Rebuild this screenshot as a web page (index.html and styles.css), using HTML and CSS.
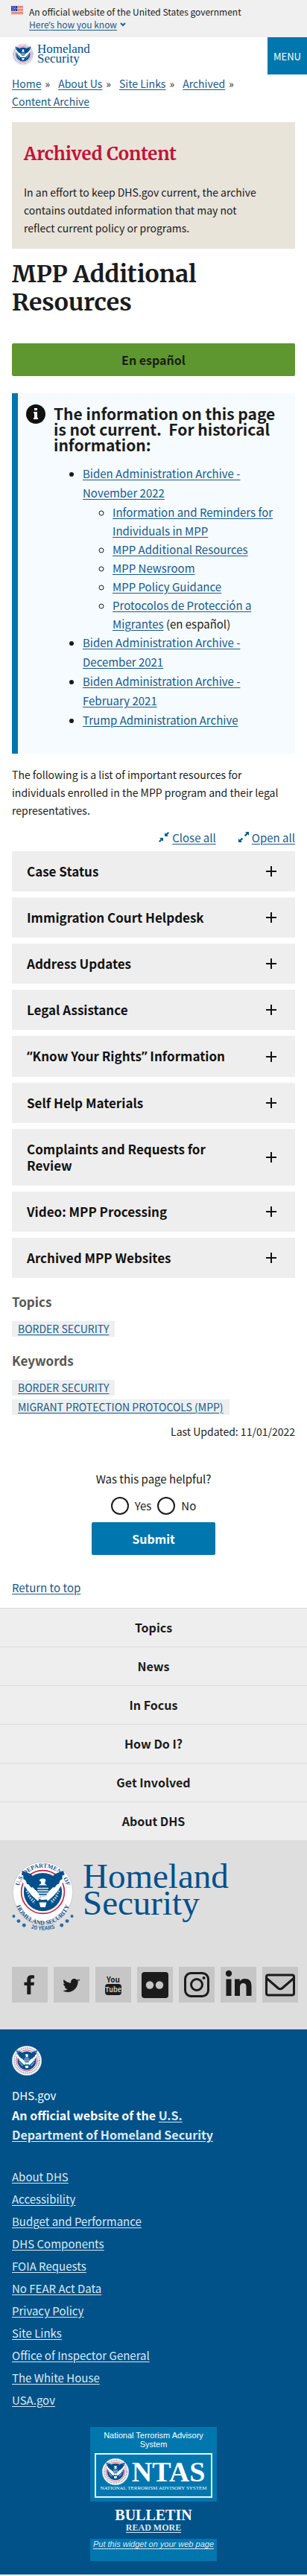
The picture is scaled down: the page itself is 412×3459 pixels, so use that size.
FILE: index.html
```html
<!DOCTYPE html>
<html lang="en">
<head>
<meta charset="utf-8">
<meta name="viewport" content="width=device-width, initial-scale=1">
<title>MPP Additional Resources | Homeland Security</title>
<link rel="stylesheet" href="styles.css">
</head>
<body>
<svg class="sprite" aria-hidden="true">
  <symbol id="emblem" viewBox="-50 -50 100 100">
    <circle r="49.5" fill="#fff" stroke="#c3c5cc"/>
    <circle r="35.5" fill="#fff" stroke="#c8203c" stroke-width="2"/>
    <circle r="31.5" fill="#00508c"/>
    <path fill="#fff" d="M-39-30C-30-24-22-16-16-8L-9 0-4 8-8 15-18 6C-26-2-33-14-39-30ZM39-30C30-24 22-16 16-8L9 0 4 8 8 15 18 6C26-2 33-14 39-30Z"/>
    <path fill="#00508c" d="M-34-35-20-30C-13-24-10-14-8-3L-12-3-17-8-19-7-24-13-26-13-29-20-32-21-32-27-35-28ZM34-35 20-30C13-24 10-14 8-3L12-3 17-8 19-7 24-13 26-13 29-20 32-21 32-27 35-28Z"/>
    <path fill="#fff" d="M-6-19C-4-23 3-23 5-20L4-17 3-14 7-11-7-11-3-14-3-17ZM-6 17H6L4 25H-4ZM-3 7 5 7 10 12-2 13-8 10Z"/>
    <path fill="none" stroke="#cfe0ee" stroke-width="2" d="M-9-6H9M-9-2H9M-8 2H8M-6 6H6"/>
    <path fill="none" stroke="#bcd3e6" stroke-width="3" stroke-dasharray="2 2" d="M-27-2-20 10-12 16M27-2 20 10 12 16M-24 6-14 19M24 6 14 19"/>
    <path fill="#e5d9a5" d="M-9 9-3 7-2 10-7 12Z"/>
  </symbol>
  <symbol id="ring" viewBox="-50 -50 100 100">
    <circle r="42" fill="none" stroke="#8c9bb8" stroke-width="6" stroke-dasharray="2 2"/>
  </symbol>
  <symbol id="plus" viewBox="0 0 14 14"><path d="M7 0v14M0 7h14" fill="none" stroke="#111" stroke-width="2"/></symbol>
</svg>

<div class="banner">
  <svg class="flag" viewBox="0 0 16 11" aria-hidden="true"><path fill="#fff" d="M0 0h16v11H0z"/><path stroke="#db3e1f" stroke-width="1" d="M0 .5h16M0 2.5h16M0 4.5h16M0 6.5h16M0 8.5h16M0 10.5h16"/><path fill="#1e33b1" d="M0 0h8v7H0z"/><path stroke="#fff" stroke-width="1" stroke-dasharray="1 1" d="M1 1.500h6M2 3.500h6M1 5.500h6"/></svg>
  <div>
    <p class="banner-text">An official website of the United States government</p>
    <button class="banner-button" type="button"><span>Here<span class="quote">’</span>s how you know</span><svg viewBox="0 0 8 6" aria-hidden="true"><path d="M1 1l3 3 3-3" fill="none" stroke="#1d6794" stroke-width="2"/></svg></button>
  </div>
</div>

<header class="header">
  <a class="logo" href="#"><svg class="logo-seal" aria-hidden="true"><use href="#emblem"/><use href="#ring"/></svg><span>Homeland<br>Security</span></a>
  <button class="menu" type="button">MENU</button>
</header>

<main class="main">
  <nav aria-label="Breadcrumb"><ol class="crumbs">
    <li><a href="#">Home</a></li>
    <li><a href="#">About Us</a></li>
    <li><a href="#">Site Links</a></li>
    <li><a href="#">Archived</a></li>
    <li><a href="#">Content Archive</a></li>
  </ol></nav>

  <section class="archived">
    <h2>Archived Content</h2>
    <p>In an effort to keep DHS.gov current, the archive contains outdated information that may not reflect current policy or programs.</p>
  </section>

  <h1>MPP Additional Resources</h1>
  <a class="translate" href="#">En español</a>

  <section class="alert">
    <svg class="info" viewBox="0 0 26 26" aria-hidden="true"><circle cx="13" cy="13" r="13" fill="#111"/><path fill="#fff" d="M11 5h4v3h-4zM10 10h5v8h1v2h-6v-2h1v-6h-1z"/></svg>
    <div class="alert-body">
      <h2>The information on this page is not current.&nbsp; For historical information:</h2>
      <ul>
        <li><a href="#">Biden Administration Archive - November 2022</a>
          <ul>
            <li><a href="#">Information and Reminders for Individuals in MPP</a></li>
            <li><a href="#">MPP Additional Resources</a></li>
            <li><a href="#">MPP Newsroom</a></li>
            <li><a href="#">MPP Policy Guidance</a></li>
            <li><a href="#">Protocolos de Protección a Migrantes</a> (en español)</li>
          </ul>
        </li>
        <li><a href="#">Biden Administration Archive - December 2021</a></li>
        <li><a href="#">Biden Administration Archive - February 2021</a></li>
        <li><a href="#">Trump Administration Archive</a></li>
      </ul>
    </div>
  </section>

  <p class="intro">The following is a list of important resources for individuals enrolled in the MPP program and their legal representatives.</p>

  <div class="toggles">
    <a href="#"><svg viewBox="0 0 14 14" aria-hidden="true"><path fill="#0b5c8f" d="M8 1v5h5l-1.700-1.700L14 1.500 12.500 0 9.700 2.700zM6 13V8H1l1.700 1.700L0 12.500 1.500 14l2.800-2.700z"/></svg><span>Close all</span></a>
    <a href="#"><svg viewBox="0 0 14 14" aria-hidden="true"><path fill="#0b5c8f" d="M14 0v5l-1.700-1.700L9.500 6.200 7.800 4.500l2.900-2.800L9 0zM0 14V9l1.700 1.700 2.800-2.900 1.700 1.700-2.900 2.800L5 14z"/></svg><span>Open all</span></a>
  </div>

  <div class="accordion">
    <button type="button"><span>Case Status</span><svg aria-hidden="true"><use href="#plus"/></svg></button>
    <button type="button"><span>Immigration Court Helpdesk</span><svg aria-hidden="true"><use href="#plus"/></svg></button>
    <button type="button"><span>Address Updates</span><svg aria-hidden="true"><use href="#plus"/></svg></button>
    <button type="button"><span>Legal Assistance</span><svg aria-hidden="true"><use href="#plus"/></svg></button>
    <button type="button"><span><span class="quote">“</span>Know Your Rights<span class="quote">”</span> Information</span><svg aria-hidden="true"><use href="#plus"/></svg></button>
    <button type="button"><span>Self Help Materials</span><svg aria-hidden="true"><use href="#plus"/></svg></button>
    <button type="button"><span>Complaints and Requests for Review</span><svg aria-hidden="true"><use href="#plus"/></svg></button>
    <button type="button"><span>Video: MPP Processing</span><svg aria-hidden="true"><use href="#plus"/></svg></button>
    <button type="button"><span>Archived MPP Websites</span><svg aria-hidden="true"><use href="#plus"/></svg></button>
  </div>

  <section class="tags">
    <h2>Topics</h2>
    <ul><li><a href="#">BORDER SECURITY</a></li></ul>
    <h2>Keywords</h2>
    <ul><li><a href="#">BORDER SECURITY</a></li><li><a href="#">MIGRANT PROTECTION PROTOCOLS (MPP)</a></li></ul>
  </section>
  <p class="updated">Last Updated: 11/01/2022</p>

  <form class="feedback">
    <p id="helpful">Was this page helpful?</p>
    <div class="choices" role="radiogroup" aria-labelledby="helpful">
      <label><input type="radio" name="helpful" value="yes">Yes</label>
      <label><input type="radio" name="helpful" value="no">No</label>
    </div>
    <button type="button">Submit</button>
  </form>
  <a class="top-link" href="#">Return to top</a>
</main>

<footer>
  <nav class="footer-nav" aria-label="Footer">
    <a href="#">Topics</a>
    <a href="#">News</a>
    <a href="#">In Focus</a>
    <a href="#">How Do I?</a>
    <a href="#">Get Involved</a>
    <a href="#">About DHS</a>
  </nav>

  <div class="brand">
    <a class="brand-logo" href="#">
      <svg class="brand-seal" viewBox="-51 -51 102 124" aria-label="U.S. Department of Homeland Security, 20 years">
        <defs><path id="arc-full" d="M-38 12A40 40 0 1 1 38 12"/><path id="arc-low" d="M-46 8A46 46 0 0 0 46 8"/><path id="arc-years" d="M-40 49A64 64 0 0 0 40 49"/></defs>
        <use href="#emblem" x="-50" y="-50" width="100" height="100"/>
        <g class="seal-text">
          <text><textPath href="#arc-full" startOffset="50%">U.S. DEPARTMENT OF</textPath></text>
          <text><textPath href="#arc-low" startOffset="50%">HOMELAND SECURITY</textPath></text>
          <text class="years"><textPath href="#arc-years" startOffset="50%">20 YEARS</textPath></text>
        </g>
        <g fill="#2a6ca3"><circle cx="-48" cy="40" r="2.500"/><circle cx="-40" cy="48" r="3"/><circle cx="-31" cy="55" r="3"/><circle cx="48" cy="40" r="2.500"/><circle cx="40" cy="48" r="3"/><circle cx="31" cy="55" r="3"/></g>
      </svg>
      <span>Homeland<br>Security</span>
    </a>
    <div class="social">
      <a href="#" aria-label="Facebook"><svg viewBox="0 0 48 48"><path fill="#1b1b1b" d="M30 11.500v4h-2.500c-1.800 0-2.200.9-2.200 2.200v3H30l-.6 4.300h-4.100V37h-5V25h-3.800v-4.300h3.800v-3.500c0-3.800 2.300-5.900 5.800-5.900 1.600 0 3.200.1 3.900.2z"/></svg></a>
      <a href="#" aria-label="Twitter"><svg viewBox="0 0 48 48"><path fill="#1b1b1b" d="M35 16.500a9 9 0 0 1-2.300 2.400c.2 9.500-7 15-13.700 15-2.500 0-4.800-.7-6.700-1.900 2.300.2 4.600-.4 6.500-1.900-2-.1-3.500-1.300-4.100-3 .7.100 1.300.1 2-.1-2.100-.5-3.600-2.300-3.600-4.500.6.300 1.300.5 2 .6-2-1.400-2.600-4-1.400-6.100 2.300 2.800 5.700 4.600 9.500 4.800-.7-3 1.500-5.700 4.500-5.700 1.300 0 2.500.6 3.300 1.500 1-.2 2-.6 2.900-1.100-.3 1-1 1.900-2 2.500 1-.1 2.200-.4 3.100-.5z"/></svg></a>
      <a href="#" aria-label="YouTube"><svg viewBox="0 0 48 48" class="youtube"><rect x="13" y="23" width="22" height="15" rx="4" fill="#1b1b1b"/><text x="24" y="21">You</text><text x="24" y="34" class="tube">Tube</text></svg></a>
      <a href="#" aria-label="Flickr"><svg viewBox="0 0 48 48"><rect x="6" y="7" width="36" height="35" rx="4" fill="#1b1b1b"/><circle cx="17" cy="24.500" r="5.200" fill="#c6c6c6"/><circle cx="30" cy="24.500" r="5.200" fill="#c6c6c6"/></svg></a>
      <a href="#" aria-label="Instagram"><svg viewBox="0 0 48 48"><rect x="8.500" y="8.500" width="31" height="31" rx="8" fill="none" stroke="#1b1b1b" stroke-width="3"/><circle cx="24" cy="24" r="7.500" fill="none" stroke="#1b1b1b" stroke-width="3"/><circle cx="33.500" cy="15" r="2" fill="#1b1b1b"/></svg></a>
      <a href="#" aria-label="LinkedIn"><svg viewBox="0 0 48 48"><circle cx="11" cy="9" r="4.200" fill="#1b1b1b"/><path fill="#1b1b1b" d="M7.500 16.500h7V39h-7zM19 16.500h6.700v3.100c1.300-2.200 3.700-3.700 7-3.700 7 0 8.800 4.400 8.800 10.600V39h-7V27.800c0-3-.3-5.900-4-5.900-3.600 0-4.500 2.500-4.500 5.800V39h-7z"/></svg></a>
      <a href="#" aria-label="Email"><svg viewBox="0 0 48 48"><rect x="5.500" y="11" width="37" height="27" rx="2.500" fill="none" stroke="#1b1b1b" stroke-width="3"/><path d="M6 15.500 21 28.500c2 1.700 4 1.700 6 0L42 15.500" fill="none" stroke="#1b1b1b" stroke-width="3"/></svg></a>
    </div>
  </div>

  <div class="identifier">
    <svg class="small-seal" aria-hidden="true"><use href="#emblem"/><use href="#ring"/></svg>
    <p>DHS.gov</p>
    <p class="official">An official website of the <a href="#">U.S. Department of Homeland Security</a></p>
    <ul class="links">
      <li><a href="#">About DHS</a></li>
      <li><a href="#">Accessibility</a></li>
      <li><a href="#">Budget and Performance</a></li>
      <li><a href="#">DHS Components</a></li>
      <li><a href="#">FOIA Requests</a></li>
      <li><a href="#">No FEAR Act Data</a></li>
      <li><a href="#">Privacy Policy</a></li>
      <li><a href="#">Site Links</a></li>
      <li><a href="#">Office of Inspector General</a></li>
      <li><a href="#">The White House</a></li>
      <li><a href="#">USA.gov</a></li>
    </ul>

    <div class="ntas">
      <div class="ntas-head">
        <p>National Terrorism Advisory System</p>
        <div class="ntas-box">
          <div class="ntas-row"><svg class="ntas-seal" aria-hidden="true"><use href="#emblem"/><use href="#ring"/></svg><strong>NTAS</strong></div>
          <span class="ntas-small">NATIONAL TERRORISM ADVISORY SYSTEM</span>
        </div>
      </div>
      <div class="ntas-body"><strong>BULLETIN</strong><a href="#">READ MORE</a></div>
      <div class="ntas-foot"><a href="#">Put this widget on your web page</a></div>
    </div>
  </div>
</footer>
</body>
</html>
```
FILE: styles.css
```css
* { box-sizing: border-box; }

body {
  margin: 0;
  background: #fff;
  color: #1b1b1b;
  font-family: "Source Sans Pro", "Noto Sans CJK SC", sans-serif;
  font-size: 15px;
  line-height: 25px;
}

h1, h2, p, ul, ol { margin: 0; padding: 0; }
a { color: #185a8c; text-underline-offset: 2px; }
button { font-family: inherit; border: 0; margin: 0; cursor: pointer; }
.sprite { display: block; width: 0; height: 0; }
.quote { font-family: "Open Sans", sans-serif; }

/* Government banner */
.banner {
  display: flex;
  gap: 8px;
  padding: 7px 15px 8px;
  background: #f0f0f0;
  font-size: 12px;
  line-height: 17px;
}
.flag { width: 16px; height: 11px; margin-top: 1px; }
.banner-button {
  display: flex;
  align-items: center;
  gap: 4px;
  padding: 0;
  background: none;
  color: #185a8c;
  font-size: 12px;
  line-height: 17px;
}
.banner-button > span { text-decoration: underline; text-underline-offset: 2px; }
.banner-button svg { width: 8px; height: 6px; }

/* Header */
.header {
  display: flex;
  justify-content: space-between;
  align-items: flex-start;
}
.logo {
  display: flex;
  gap: 4px;
  padding: 8px 0 0 16px;
  color: #00508c;
  font-family: "Liberation Serif", serif;
  font-size: 17px;
  line-height: 13px;
  text-decoration: none;
}
.logo span { padding-top: 1px; }
.logo-seal { width: 30px; height: 30px; }
.menu {
  width: 53px;
  height: 50px;
  padding: 0;
  background: #0076ae;
  color: #fff;
  font-size: 13px;
}

/* Main column */
.main { padding: 0 16px; }
.crumbs {
  display: flex;
  flex-wrap: wrap;
  column-gap: 11px;
  list-style: none;
  font-size: 14px;
  line-height: 24px;
}
.crumbs li:not(:last-child)::after { content: "»"; margin-left: 5px; }

.archived {
  margin-top: 16px;
  padding: 30px 36px 16px 16px;
  background: #e8e4da;
  font-size: 14px;
  line-height: 24px;
}
.archived h2 {
  margin-bottom: 26px;
  color: #c41237;
  font-family: Merriweather, "DejaVu Serif Condensed", "DejaVu Serif", serif;
  font-size: 24px;
  line-height: 26px;
}
h1 {
  margin-top: 15px;
  font-family: Merriweather, "DejaVu Serif Condensed", "DejaVu Serif", serif;
  font-size: 32px;
  line-height: 38px;
}
.translate {
  display: block;
  margin-top: 36px;
  padding: 9px;
  border-radius: 2px;
  background: #5e972f;
  color: #1b1b1b;
  font-size: 16px;
  font-weight: 700;
  line-height: 26px;
  text-align: center;
  text-decoration: none;
}

.alert {
  display: flex;
  gap: 11px;
  margin-top: 23px;
  padding: 15px 16px 32px 11px;
  border-left: 8px solid #0076ae;
  background: #f5fbfe;
}
.info { flex: none; width: 26px; height: 26px; }
.alert-body { padding-top: 2px; }
.alert h2 { margin-bottom: 15px; font-size: 21px; line-height: 21px; }
.alert ul { padding-left: 39px; line-height: 26px; }
.alert ul ul { padding-left: 40px; line-height: 25px; }

.intro { margin-top: 16px; font-size: 14px; line-height: 24px; }
.toggles {
  display: flex;
  justify-content: flex-end;
  gap: 30px;
  margin: 13px 0 6px;
  line-height: 24px;
}
.toggles a { display: flex; gap: 4px; text-decoration: none; }
.toggles span { text-decoration: underline; text-underline-offset: 2px; }
.toggles svg { width: 14px; height: 14px; margin-top: 4px; }

.accordion { display: grid; gap: 8px; }
.accordion button {
  display: flex;
  align-items: center;
  justify-content: space-between;
  gap: 32px;
  padding: 16px 25px 16px 20px;
  background: #eee;
  color: #111;
  font-size: 17px;
  font-weight: 700;
  line-height: 22px;
  text-align: left;
}
.accordion svg { flex: none; width: 14px; height: 14px; }

.tags { padding-top: 20px; }
.tags h2 { color: #565656; font-size: 17px; line-height: 24px; }
.tags ul { margin: 11px 0 18px; list-style: none; font-size: 14px; line-height: 26px; }
.tags ul a { display: inline-block; padding: 0 8px; background: #edeff0; line-height: 21px; }
.updated { margin-top: -10px; font-size: 14px; line-height: 24px; text-align: right; }

.feedback {
  display: grid;
  justify-items: center;
  margin-top: 39px;
}
.choices { display: flex; gap: 8px; margin: 12px 0 10px; line-height: 24px; }
.choices label { display: flex; gap: 8px; }
.choices input {
  appearance: none;
  width: 24px;
  height: 24px;
  margin: 0;
  border: 2px solid #1b1b1b;
  border-radius: 50%;
  background: #fff;
}
.feedback button {
  width: 166px;
  padding: 9px;
  border-radius: 2px;
  background: #0076ae;
  color: #fff;
  font-size: 16px;
  font-weight: 700;
  line-height: 26px;
}
.top-link { display: block; width: fit-content; margin: 31px 0 15px; }

/* Footer */
.footer-nav a {
  display: block;
  padding: 13px 16px;
  border-top: 1px solid #dcdcdc;
  background: #eee;
  color: #1b1b1b;
  font-size: 16px;
  font-weight: 700;
  text-align: center;
  text-decoration: none;
}
.brand { padding: 28px 16px 35px; background: #dedede; }
.brand-logo {
  display: flex;
  gap: 12px;
  color: #00508c;
  font-family: "Liberation Serif", serif;
  font-size: 47px;
  line-height: 36px;
  text-decoration: none;
}
.brand-seal { width: 83px; height: 101px; }
.brand-logo span { padding-top: 2px; }
.seal-text {
  fill: #1f4f86;
  font-family: "Liberation Serif", serif;
  font-size: 10px;
  font-weight: 700;
  text-anchor: middle;
}
.seal-text .years { fill: #2a6ca3; font-family: "Noto Sans CJK SC", sans-serif; font-size: 9px; }
.social {
  display: grid;
  grid-template-columns: repeat(7, 48px);
  gap: 8px;
  margin: 41px -16px 0 0;
}
.social a { height: 48px; background: #c6c6c6; }
.social svg { display: block; width: 48px; height: 48px; }
.youtube {
  fill: #1b1b1b;
  font-family: "Noto Sans CJK SC", sans-serif;
  font-size: 10px;
  font-weight: 700;
  text-anchor: middle;
}
.youtube .tube { fill: #c6c6c6; font-size: 9px; }

.identifier {
  padding: 22px 16px 18px;
  border-top: 1px solid #d5e4ee;
  background: #005288;
  color: #fff;
  line-height: 26px;
}
.identifier a { color: #dbeaf6; }
.small-seal { display: block; width: 40px; height: 40px; margin-bottom: 14px; }
.official { max-width: 300px; font-size: 16px; font-weight: 700; }
.links { margin-top: 29px; list-style: none; line-height: 30px; }
.ntas {
  width: 170px;
  margin: 21px auto 0;
  font-family: "Liberation Sans", sans-serif;
  font-size: 11px;
  line-height: 12px;
  text-align: center;
}
.ntas-head { padding: 5px 6px; background: #0076ae; }
.ntas-box {
  margin-top: 6px;
  padding: 5px 4px 6px;
  border: 2px solid #e9f6fc;
  font-family: "Liberation Serif", serif;
}
.ntas-row { display: flex; align-items: center; justify-content: center; gap: 4px; height: 36px; }
.ntas-seal { width: 36px; height: 36px; }
.ntas-row strong { font-size: 38px; line-height: 36px; }
.ntas-small { display: block; font-size: 7px; line-height: 9px; white-space: nowrap; }
.ntas-body {
  display: grid;
  padding: 8px 0 7px;
  font-family: "Liberation Serif", serif;
  font-weight: 700;
}
.ntas-body strong { font-size: 20px; line-height: 20px; }
.ntas-body a { font-size: 12px; line-height: 15px; }
.ntas-foot { height: 30px; padding-top: 1px; background: #0076ae; font-style: italic; }
```
